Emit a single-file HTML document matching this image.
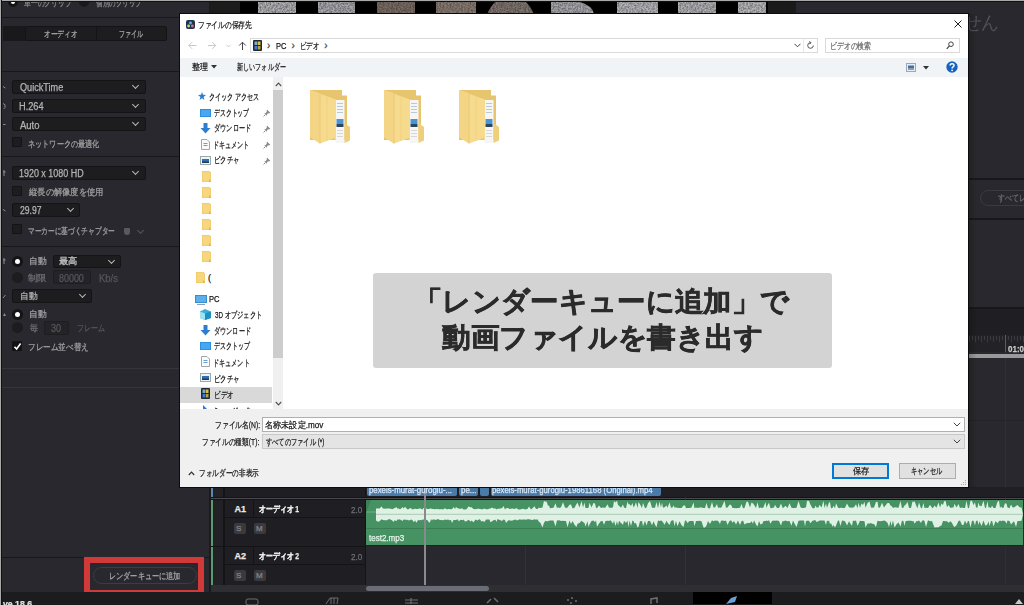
<!DOCTYPE html>
<html lang="ja">
<head>
<meta charset="utf-8">
<style>
*{box-sizing:border-box;margin:0;padding:0}
html,body{width:1024px;height:605px;overflow:hidden}
body{position:relative;background:#28282e;font-family:"Liberation Sans",sans-serif;color:#a0a0a2}
.a{position:absolute}
.t{position:absolute;white-space:nowrap;line-height:1}
.dd{position:absolute;background:#1d1d20;border:1px solid #141416;border-radius:2px}
.chev{position:absolute;width:5px;height:5px;border-right:1.3px solid #b8b8b8;border-bottom:1.3px solid #b8b8b8;transform:rotate(45deg)}
.cb{position:absolute;width:10px;height:10px;background:#1d1d20;border:1px solid #141416;border-radius:1px}
.hl{position:absolute;height:1px;background:#18181b}
</style>
</head>
<body>
<!-- LEFT PANEL -->
<div id="left">
  <!-- top radios (cut) -->
  <div class="a" style="left:8px;top:-3px;width:10px;height:10px;border-radius:50%;background:#141416"></div>
  <div class="a" style="left:11px;top:1px;width:4px;height:3px;border-radius:0 0 3px 3px;background:#fff"></div>
  <div class="a" style="left:79px;top:-3px;width:10px;height:10px;border-radius:50%;background:#1a1a1d"></div>
  <div class="hl" style="left:2px;top:17px;width:208px"></div>
  <!-- segmented -->
  <div class="a" style="left:3px;top:26px;width:164px;height:15px;background:#1d1d20;border:1px solid #141416;border-radius:2px"></div>
  <div class="a" style="left:3px;top:26px;width:23px;height:15px;background:#19191b"></div>
  <div class="a" style="left:25px;top:27px;width:1px;height:13px;background:#141416"></div>
  <div class="a" style="left:96px;top:27px;width:1px;height:13px;background:#141416"></div>
  <div class="hl" style="left:2px;top:71px;width:208px"></div>

  <div class="dd" style="left:12px;top:80px;width:134px;height:14px"></div>
  <div class="chev" style="left:133px;top:83px"></div>
  <div class="dd" style="left:12px;top:99px;width:134px;height:14px"></div>
  <div class="chev" style="left:133px;top:102px"></div>
  <div class="dd" style="left:12px;top:117px;width:134px;height:14px"></div>
  <div class="chev" style="left:133px;top:120px"></div>
  <div class="cb" style="left:12px;top:137px"></div>
  <div class="hl" style="left:2px;top:156px;width:208px"></div>

  <div class="dd" style="left:12px;top:166px;width:134px;height:14px"></div>
  <div class="chev" style="left:133px;top:169px"></div>
  <div class="cb" style="left:12px;top:186px"></div>
  <div class="dd" style="left:12px;top:203px;width:68px;height:14px"></div>
  <div class="chev" style="left:68px;top:206px"></div>
  <div class="cb" style="left:12px;top:224px"></div>
  <div class="a" style="left:124px;top:228px;width:6px;height:7px;background:#5a5a5e;border-radius:1px 1px 3px 3px"></div>
  <div class="chev" style="left:138px;top:228px;border-color:#55555a"></div>
  <div class="hl" style="left:2px;top:246px;width:208px"></div>

  <div class="a" style="left:12px;top:256px;width:11px;height:11px;border-radius:50%;background:#141416"></div>
  <div class="a" style="left:15px;top:259px;width:5px;height:5px;border-radius:50%;background:#fff"></div>
  <div class="dd" style="left:53px;top:255px;width:68px;height:13px"></div>
  <div class="chev" style="left:109px;top:258px"></div>
  <div class="a" style="left:12px;top:272px;width:11px;height:11px;border-radius:50%;background:#1d1d20"></div>
  <div class="a" style="left:53px;top:270px;width:38px;height:14px;background:#242428;border:1px solid #1e1e21;border-radius:2px"></div>
  <div class="dd" style="left:12px;top:289px;width:80px;height:14px"></div>
  <div class="chev" style="left:80px;top:292px"></div>
  <div class="a" style="left:12px;top:309px;width:11px;height:11px;border-radius:50%;background:#141416"></div>
  <div class="a" style="left:15px;top:312px;width:5px;height:5px;border-radius:50%;background:#fff"></div>
  <div class="a" style="left:12px;top:322px;width:11px;height:11px;border-radius:50%;background:#1d1d20"></div>
  <div class="a" style="left:44px;top:321px;width:25px;height:14px;background:#242428;border:1px solid #1e1e21;border-radius:2px"></div>
  <div class="cb" style="left:12px;top:341px;background:#121214"></div>
<svg class="a" style="left:13px;top:342px" width="9" height="9" viewBox="0 0 9 9"><path d="M1.5 4.8L3.6 7L7.6 1.6" stroke="#fff" stroke-width="1.6" fill="none"/></svg>
  <div class="a" style="left:2px;top:368px;width:208px;height:1px;background:#35353a"></div>
  <div class="a" style="left:2px;top:387px;width:208px;height:1px;background:#35353a"></div>

  <div class="hl" style="left:2px;top:557px;width:208px"></div>
  <div class="a" style="left:93px;top:567px;width:104px;height:17px;border:1px solid #3c3c41;border-radius:9px;background:#28282e"></div>
  <div class="a" style="left:84px;top:557px;width:120px;height:39px;border:6px solid #d23a3a"></div>
</div>
<svg class="a" style="left:0;top:0" width="12" height="400" viewBox="0 0 12 400">
<path d="M3 86.5L5.5 88" stroke="#8a8a8e" stroke-width="1"/>
<path d="M3 103.5Q6 104 5 107.5L3.5 109" stroke="#8a8a8e" stroke-width="1" fill="none"/>
<path d="M3 124.5H5.5" stroke="#8a8a8e" stroke-width="1"/>
<path d="M4 170V176M3 172H5.5" stroke="#8a8a8e" stroke-width="1"/>
<path d="M3 209.5L5.5 211" stroke="#8a8a8e" stroke-width="1"/>
<path d="M4 258V264M3 260H5.5" stroke="#8a8a8e" stroke-width="1"/>
<path d="M3 298L5.5 295" stroke="#8a8a8e" stroke-width="1"/>
<path d="M3 316L4.5 313L6 316Z" fill="#8a8a8e"/>
</svg>
<!-- panel separator -->
<div class="a" style="left:209px;top:2px;width:2px;height:590px;background:#1a1a1d"></div>

<!-- RIGHT BG PANEL -->
<div class="a" style="left:210px;top:2px;width:30px;height:12px;background:#1c1c1d"></div>
<div class="a" style="left:240px;top:2px;width:528px;height:12px;background:#000"></div>
<div class="a" style="left:768px;top:2px;width:28px;height:12px;background:#1a1a1a"></div>
<svg class="a" style="left:0;top:2px" width="1024" height="12" viewBox="0 2 1024 12"><defs><filter id="nz" x="0" y="0" width="100%" height="100%"><feTurbulence type="fractalNoise" baseFrequency="0.6" numOctaves="2" seed="4"/><feColorMatrix type="matrix" values="0 0 0 0 0  0 0 0 0 0  0 0 0 0 0  0 0 0 -1.6 1.1"/><feComposite in2="SourceGraphic" operator="in"/></filter></defs><rect x="258" y="2" width="38" height="12" fill="#b4b4b8"/><rect x="258" y="2" width="38" height="12" fill="#000" filter="url(#nz)" opacity="0.55"/><rect x="318" y="2" width="37" height="12" fill="#a8a8ae"/><rect x="318" y="2" width="37" height="12" fill="#000" filter="url(#nz)" opacity="0.5"/><rect x="377" y="2" width="38" height="12" fill="#7a6c64"/><rect x="377" y="2" width="38" height="12" fill="#000" filter="url(#nz)" opacity="0.45"/><rect x="436" y="2" width="40" height="12" fill="#877a72"/><rect x="436" y="2" width="40" height="12" fill="#000" filter="url(#nz)" opacity="0.45"/><clipPath id="moon"><circle cx="510.5" cy="20.7" r="24"/></clipPath><g clip-path="url(#moon)"><rect x="486" y="2" width="49" height="12" fill="#807670"/><rect x="486" y="2" width="49" height="12" fill="#000" filter="url(#nz)" opacity="0.5"/></g><clipPath id="m6"><path d="M551 2H580Q593 6 594 14H551Z"/></clipPath><g clip-path="url(#m6)"><rect x="551" y="2" width="43" height="12" fill="#a6a6ac"/><rect x="551" y="2" width="43" height="12" fill="#000" filter="url(#nz)" opacity="0.5"/></g><rect x="617" y="2" width="41" height="12" fill="#b6b6ba"/><rect x="617" y="2" width="41" height="12" fill="#000" filter="url(#nz)" opacity="0.5"/><rect x="678" y="2" width="38" height="12" fill="#b2b2b6"/><rect x="678" y="2" width="38" height="12" fill="#000" filter="url(#nz)" opacity="0.5"/><rect x="738" y="2" width="28" height="12" fill="#b8b8bc"/><rect x="738" y="2" width="28" height="12" fill="#000" filter="url(#nz)" opacity="0.5"/></svg>

<!-- TIMELINE -->
<div class="a" style="left:211px;top:487px;width:813px;height:105px;background:#28282e"></div>
<div class="a" style="left:211px;top:487px;width:155px;height:98px;background:#1f1f23"></div>
<div class="a" style="left:213px;top:487px;width:10px;height:98px;background:#222226"></div>
<div class="a" style="left:223px;top:487px;width:2px;height:98px;background:#141416"></div>
<div class="a" style="left:365px;top:487px;width:1px;height:98px;background:#141416"></div>
<div class="a" style="left:211px;top:487px;width:2px;height:10px;background:#5a86b0"></div>
<div class="a" style="left:211px;top:500px;width:2px;height:85px;background:#5a9a70"></div>
<div class="a" style="left:211px;top:497px;width:813px;height:1px;background:#141416"></div>
<div class="a" style="left:211px;top:498px;width:813px;height:1px;background:#4a4a50"></div>
<div class="a" style="left:211px;top:499px;width:813px;height:1px;background:#141416"></div>
<!-- A1 -->
<div class="a" style="left:225px;top:517px;width:140px;height:1px;background:#141416"></div>
<div class="a" style="left:253px;top:500px;width:1px;height:17px;background:#141416"></div>
<div class="a" style="left:234px;top:523px;width:12px;height:11px;background:#3a3a3e;border-radius:2px"></div>
<div class="a" style="left:254px;top:523px;width:12px;height:11px;background:#3a3a3e;border-radius:2px"></div>
<div class="a" style="left:211px;top:546px;width:155px;height:1px;background:#141416"></div>
<!-- A2 -->
<div class="a" style="left:225px;top:564px;width:140px;height:1px;background:#141416"></div>
<div class="a" style="left:253px;top:547px;width:1px;height:17px;background:#141416"></div>
<div class="a" style="left:234px;top:570px;width:12px;height:11px;background:#3a3a3e;border-radius:2px"></div>
<div class="a" style="left:254px;top:570px;width:12px;height:11px;background:#3a3a3e;border-radius:2px"></div>
<!-- grid lines -->
<div class="a" style="left:525px;top:546px;width:1px;height:39px;background:#313136"></div>
<div class="a" style="left:685px;top:487px;width:1px;height:98px;background:#313136"></div>
<div class="a" style="left:1005px;top:352px;width:1px;height:233px;background:#2f2f34"></div>
<div class="a" style="left:968px;top:420px;width:56px;height:1px;background:#232327"></div>
<div class="a" style="left:366px;top:487px;width:658px;height:10px;background:#202024"></div>
<!-- video clips -->
<div class="a" style="left:367px;top:487px;width:90px;height:9px;background:#4a7aa8;border-radius:0 0 2px 2px"></div>
<div class="a" style="left:459px;top:487px;width:19px;height:9px;background:#4a7aa8;border-radius:0 0 2px 2px"></div>
<div class="a" style="left:480px;top:487px;width:9px;height:9px;background:#4a7aa8;border-radius:0 0 2px 2px"></div>
<div class="a" style="left:491px;top:487px;width:170px;height:9px;background:#4a7aa8;border-radius:0 0 2px 2px"></div>
<!-- audio clip -->
<div class="a" style="left:366px;top:500px;width:657px;height:45px;background:#479263"></div>
<div class="a" style="left:366px;top:528px;width:657px;height:1px;background:#3c7e53"></div>
<div class="a" style="left:366px;top:545px;width:658px;height:1px;background:#1a2420"></div>
<svg class="a" style="left:0;top:0" width="1024" height="605" viewBox="0 0 1024 605"><path d="M376,514.3 L376.0,508.4 L378.0,508.6 L379.5,508.6 L381.5,506.4 L383.0,508.5 L385.0,508.7 L387.0,508.6 L389.0,508.5 L391.0,508.7 L392.0,509.3 L393.5,508.8 L394.5,508.0 L396.5,507.2 L397.5,508.7 L398.5,508.2 L399.5,509.3 L401.0,508.8 L402.5,507.0 L403.5,508.6 L405.0,506.8 L407.0,509.1 L408.0,509.4 L410.0,508.2 L411.0,508.0 L412.0,509.5 L414.0,509.0 L415.0,508.8 L416.5,508.9 L418.0,508.9 L419.0,508.4 L420.5,508.5 L421.5,509.1 L422.5,509.5 L423.5,508.1 L425.5,508.3 L427.5,509.1 L429.0,508.9 L430.0,508.4 L431.0,508.5 L432.0,509.1 L433.0,508.9 L434.0,509.1 L435.0,509.5 L436.0,508.7 L437.0,509.3 L438.5,508.9 L440.0,509.4 L441.0,508.9 L443.0,509.5 L445.0,508.3 L447.0,509.4 L448.0,508.9 L449.0,508.9 L451.0,509.2 L452.0,509.2 L453.5,507.0 L455.0,509.0 L456.0,507.0 L457.5,508.2 L459.0,508.5 L460.0,508.9 L461.0,508.6 L462.5,508.6 L463.5,509.4 L465.0,509.5 L466.5,509.3 L468.5,506.5 L470.5,507.2 L471.5,507.3 L473.5,508.9 L475.5,509.3 L477.5,508.7 L479.0,508.7 L480.0,508.9 L481.5,509.2 L483.0,509.3 L484.5,508.4 L486.0,509.2 L488.0,509.2 L489.5,508.5 L490.5,508.4 L492.0,507.6 L493.5,508.5 L495.5,508.5 L496.5,509.4 L497.5,508.7 L499.0,508.7 L500.0,508.6 L502.0,508.3 L503.5,505.9 L505.0,509.5 L506.0,508.3 L508.0,508.0 L509.5,509.0 L511.0,508.8 L512.5,508.5 L514.5,509.0 L515.5,508.6 L517.0,508.3 L518.0,509.4 L520.0,509.4 L521.0,509.3 L523.0,508.7 L524.0,508.9 L525.0,509.4 L526.0,509.3 L527.5,508.9 L529.0,506.4 L531.0,509.4 L532.5,508.3 L534.5,506.2 L536.0,509.0 L537.5,509.1 L538.5,507.8 L540.5,507.9 L542.5,507.4 L544.0,500.8 L545.5,502.0 L546.5,501.2 L548.0,505.8 L549.0,505.4 L550.0,508.2 L551.5,508.0 L553.5,507.7 L555.5,503.2 L557.0,508.2 L558.0,507.3 L559.5,508.1 L561.0,507.3 L563.0,502.2 L565.0,507.4 L566.0,508.1 L567.5,507.5 L569.5,504.8 L571.0,504.4 L572.5,508.3 L573.5,508.2 L574.5,507.7 L576.5,504.1 L577.5,502.8 L579.5,507.4 L581.5,501.0 L583.0,507.4 L584.5,502.4 L585.5,508.1 L587.5,508.1 L588.5,507.7 L589.5,502.7 L591.5,507.5 L593.5,503.0 L595.0,503.5 L596.0,507.7 L597.0,508.2 L599.0,505.6 L601.0,508.1 L602.5,507.4 L604.0,507.7 L605.5,507.6 L607.5,504.3 L609.0,507.7 L610.0,507.6 L611.0,508.0 L613.0,507.3 L614.0,501.1 L615.5,502.4 L617.0,500.8 L618.0,505.1 L619.0,505.8 L621.0,507.8 L623.0,504.4 L624.0,507.5 L626.0,508.2 L627.5,501.4 L628.5,504.2 L629.5,504.2 L631.0,506.0 L632.5,503.1 L633.5,507.4 L634.5,506.0 L636.0,502.3 L637.5,508.0 L638.5,501.9 L640.0,504.3 L642.0,508.0 L643.0,502.8 L645.0,508.2 L646.5,507.5 L648.0,503.3 L650.0,501.0 L652.0,507.8 L653.5,507.8 L655.0,507.7 L656.5,501.9 L658.0,508.3 L659.5,501.5 L661.0,507.4 L662.0,502.5 L663.0,507.8 L664.5,507.3 L666.5,505.5 L667.5,507.7 L669.5,502.4 L671.0,507.7 L672.5,507.4 L673.5,505.2 L674.5,507.4 L676.0,507.6 L677.5,507.7 L679.5,507.9 L681.5,508.1 L683.5,505.6 L685.0,505.6 L686.0,508.2 L687.5,508.1 L689.5,508.1 L691.5,507.4 L693.5,502.6 L694.5,508.3 L696.0,507.6 L697.5,508.1 L699.5,507.6 L701.5,507.4 L703.5,507.9 L705.0,508.0 L706.5,503.0 L708.0,508.2 L710.0,508.2 L712.0,502.0 L713.5,507.5 L715.0,507.4 L717.0,504.1 L718.0,507.7 L720.0,507.5 L721.0,508.1 L722.5,505.3 L724.5,500.8 L726.0,507.7 L727.5,507.4 L729.5,504.7 L731.0,504.7 L732.5,507.9 L734.0,508.0 L736.0,508.3 L738.0,508.1 L740.0,507.8 L741.5,504.1 L743.0,508.2 L744.5,508.0 L746.5,501.7 L748.0,501.7 L750.0,507.4 L751.5,502.5 L753.0,503.4 L754.0,504.8 L756.0,508.1 L757.5,502.2 L759.0,508.2 L760.5,507.4 L762.5,507.9 L763.5,507.3 L765.5,502.1 L766.5,508.1 L767.5,505.2 L769.0,502.8 L770.5,508.3 L772.0,508.1 L774.0,507.6 L775.0,504.8 L777.0,508.1 L779.0,508.1 L781.0,503.6 L782.5,507.7 L783.5,507.7 L785.5,505.8 L787.5,507.9 L789.5,503.2 L791.5,507.7 L793.0,508.1 L794.5,508.0 L796.5,507.7 L798.5,500.9 L800.5,507.3 L802.0,507.9 L804.0,508.0 L805.0,507.5 L806.0,507.4 L807.0,500.8 L809.0,501.1 L810.5,504.8 L812.5,508.2 L814.5,508.3 L815.5,505.4 L816.5,507.5 L818.5,507.5 L819.5,504.7 L821.5,507.5 L823.5,500.8 L824.5,508.0 L826.0,503.4 L827.0,508.1 L828.0,505.2 L829.0,502.5 L830.0,502.2 L831.0,508.2 L832.5,507.9 L833.5,505.7 L835.0,508.2 L836.0,503.3 L838.0,507.6 L839.0,508.2 L840.5,507.7 L842.0,507.8 L843.5,508.3 L845.0,507.8 L847.0,503.6 L849.0,507.3 L850.0,507.6 L852.0,507.8 L853.0,507.5 L854.0,507.3 L856.0,504.2 L857.5,508.2 L858.5,502.7 L860.0,507.8 L861.5,503.5 L863.0,504.9 L864.5,501.8 L865.5,507.8 L867.5,503.0 L869.5,501.6 L871.0,507.4 L872.0,507.8 L874.0,507.6 L876.0,502.0 L877.5,501.7 L878.5,507.7 L880.0,507.4 L882.0,502.8 L884.0,507.6 L885.5,505.6 L887.5,503.1 L889.0,502.9 L890.5,505.4 L891.5,505.9 L893.0,508.0 L894.5,507.3 L896.5,507.6 L898.5,507.7 L900.5,500.9 L902.0,508.2 L903.5,507.6 L904.5,505.5 L905.5,505.1 L907.5,502.1 L909.0,507.7 L911.0,508.1 L912.5,501.5 L913.5,502.1 L914.5,501.3 L916.5,506.3 L917.5,508.2 L919.0,502.4 L921.0,508.2 L922.0,507.9 L923.5,502.9 L924.5,508.1 L926.0,507.8 L928.0,508.1 L930.0,504.8 L932.0,507.8 L933.0,508.1 L934.5,505.6 L936.5,507.7 L938.5,502.4 L940.0,507.4 L941.5,503.6 L943.0,504.9 L944.0,501.6 L945.5,500.8 L947.0,507.3 L948.5,505.1 L950.5,507.9 L952.0,507.4 L953.5,507.5 L954.5,503.8 L956.5,507.6 L958.5,503.9 L960.0,507.9 L962.0,507.5 L963.5,508.0 L965.0,507.9 L966.5,500.8 L968.0,508.2 L969.0,508.0 L970.5,500.8 L972.0,500.8 L973.5,505.3 L975.0,502.3 L976.0,507.5 L977.5,507.4 L978.5,502.6 L979.5,505.8 L981.5,506.2 L983.5,500.8 L985.0,508.1 L986.0,507.7 L987.5,501.2 L988.5,507.4 L989.5,507.3 L991.0,508.0 L992.0,505.4 L993.5,508.1 L995.5,507.9 L997.5,501.8 L999.0,500.8 L1000.0,507.8 L1001.5,506.4 L1002.5,508.3 L1003.5,507.7 L1005.0,503.2 L1006.5,503.7 L1007.5,507.4 L1009.5,508.2 L1011.0,504.4 L1012.5,507.3 L1014.0,507.6 L1016.0,506.0 L1017.5,505.0 L1019.5,507.3 L1021.5,507.5 L1023,514.3 L1021.5,520.8 L1019.5,521.0 L1017.5,520.9 L1016.0,527.0 L1014.0,521.2 L1012.5,522.7 L1011.0,524.5 L1009.5,520.9 L1007.5,520.5 L1006.5,523.8 L1005.0,520.9 L1003.5,520.7 L1002.5,520.6 L1001.5,521.3 L1000.0,520.4 L999.0,521.2 L997.5,523.3 L995.5,520.9 L993.5,526.5 L992.0,520.8 L991.0,521.2 L989.5,526.1 L988.5,521.3 L987.5,524.0 L986.0,525.7 L985.0,524.8 L983.5,520.6 L981.5,526.0 L979.5,521.2 L978.5,525.1 L977.5,520.4 L976.0,520.9 L975.0,525.5 L973.5,520.7 L972.0,520.7 L970.5,527.5 L969.0,521.1 L968.0,520.9 L966.5,523.9 L965.0,520.5 L963.5,525.1 L962.0,525.0 L960.0,520.4 L958.5,521.1 L956.5,525.2 L954.5,526.9 L953.5,526.1 L952.0,522.9 L950.5,521.3 L948.5,522.8 L947.0,521.3 L945.5,521.2 L944.0,521.0 L943.0,521.0 L941.5,525.6 L940.0,525.9 L938.5,527.3 L936.5,527.2 L934.5,527.4 L933.0,523.8 L932.0,521.1 L930.0,521.3 L928.0,520.3 L926.0,527.0 L924.5,521.0 L923.5,520.3 L922.0,520.7 L921.0,523.0 L919.0,520.5 L917.5,521.2 L916.5,521.0 L914.5,523.7 L913.5,521.0 L912.5,521.2 L911.0,520.8 L909.0,520.8 L907.5,520.7 L905.5,521.2 L904.5,525.9 L903.5,521.2 L902.0,520.5 L900.5,526.4 L898.5,522.6 L896.5,524.3 L894.5,527.5 L893.0,520.6 L891.5,526.0 L890.5,520.7 L889.0,526.9 L887.5,522.7 L885.5,520.9 L884.0,520.6 L882.0,521.0 L880.0,521.2 L878.5,521.1 L877.5,520.8 L876.0,527.1 L874.0,524.1 L872.0,523.7 L871.0,523.0 L869.5,523.4 L867.5,523.4 L865.5,527.5 L864.5,521.2 L863.0,521.0 L861.5,520.9 L860.0,520.7 L858.5,524.1 L857.5,525.8 L856.0,520.4 L854.0,520.9 L853.0,520.5 L852.0,525.7 L850.0,523.1 L849.0,521.3 L847.0,525.4 L845.0,521.2 L843.5,520.7 L842.0,520.5 L840.5,525.9 L839.0,520.4 L838.0,520.4 L836.0,525.4 L835.0,527.5 L833.5,525.0 L832.5,526.8 L831.0,523.0 L830.0,524.3 L829.0,520.6 L828.0,521.2 L827.0,520.6 L826.0,525.0 L824.5,520.5 L823.5,520.5 L821.5,520.6 L819.5,520.5 L818.5,521.3 L816.5,522.1 L815.5,520.3 L814.5,520.3 L812.5,520.8 L810.5,523.3 L809.0,520.8 L807.0,520.7 L806.0,520.9 L805.0,526.5 L804.0,520.5 L802.0,520.5 L800.5,520.4 L798.5,520.7 L796.5,527.1 L794.5,523.4 L793.0,520.6 L791.5,525.7 L789.5,520.9 L787.5,521.2 L785.5,520.5 L783.5,521.2 L782.5,521.0 L781.0,525.4 L779.0,520.9 L777.0,520.4 L775.0,520.7 L774.0,520.5 L772.0,520.9 L770.5,523.8 L769.0,520.3 L767.5,521.0 L766.5,520.4 L765.5,521.1 L763.5,521.1 L762.5,523.4 L760.5,524.6 L759.0,520.9 L757.5,526.4 L756.0,524.5 L754.0,520.3 L753.0,523.8 L751.5,521.2 L750.0,523.0 L748.0,523.0 L746.5,523.3 L744.5,524.4 L743.0,520.6 L741.5,521.3 L740.0,524.9 L738.0,520.6 L736.0,524.5 L734.0,520.9 L732.5,522.7 L731.0,520.3 L729.5,521.0 L727.5,525.1 L726.0,520.6 L724.5,521.0 L722.5,520.6 L721.0,520.7 L720.0,524.1 L718.0,520.8 L717.0,520.7 L715.0,520.4 L713.5,521.2 L712.0,520.3 L710.0,523.9 L708.0,521.1 L706.5,525.4 L705.0,527.5 L703.5,527.4 L701.5,521.2 L699.5,520.8 L697.5,521.0 L696.0,521.1 L694.5,526.3 L693.5,521.0 L691.5,521.1 L689.5,521.1 L687.5,523.1 L686.0,520.6 L685.0,520.4 L683.5,526.9 L681.5,524.9 L679.5,521.3 L677.5,526.2 L676.0,520.8 L674.5,526.3 L673.5,520.5 L672.5,520.3 L671.0,521.1 L669.5,525.1 L667.5,522.4 L666.5,520.7 L664.5,524.8 L663.0,522.2 L662.0,521.0 L661.0,520.6 L659.5,520.9 L658.0,520.5 L656.5,527.3 L655.0,524.7 L653.5,521.2 L652.0,525.2 L650.0,520.9 L648.0,521.0 L646.5,525.6 L645.0,520.8 L643.0,526.2 L642.0,521.1 L640.0,521.2 L638.5,526.8 L637.5,527.5 L636.0,523.1 L634.5,523.5 L633.5,521.0 L632.5,520.4 L631.0,525.9 L629.5,520.6 L628.5,527.3 L627.5,520.5 L626.0,523.0 L624.0,520.8 L623.0,524.8 L621.0,522.9 L619.0,520.7 L618.0,525.5 L617.0,520.9 L615.5,526.1 L614.0,520.6 L613.0,523.8 L611.0,520.8 L610.0,520.3 L609.0,521.0 L607.5,520.8 L605.5,521.0 L604.0,524.7 L602.5,521.1 L601.0,521.0 L599.0,523.4 L597.0,526.7 L596.0,520.3 L595.0,522.3 L593.5,520.4 L591.5,521.0 L589.5,524.5 L588.5,526.9 L587.5,521.2 L585.5,526.5 L584.5,523.0 L583.0,522.0 L581.5,520.8 L579.5,522.9 L577.5,523.7 L576.5,526.9 L574.5,524.8 L573.5,522.7 L572.5,521.1 L571.0,524.0 L569.5,520.5 L567.5,527.2 L566.0,521.0 L565.0,520.9 L563.0,520.8 L561.0,521.1 L559.5,520.3 L558.0,520.4 L557.0,520.3 L555.5,526.4 L553.5,520.5 L551.5,520.4 L550.0,520.5 L549.0,520.7 L548.0,521.2 L546.5,521.3 L545.5,520.8 L544.0,522.8 L542.5,527.5 L540.5,522.9 L538.5,521.2 L537.5,519.3 L536.0,519.8 L534.5,519.2 L532.5,519.9 L531.0,519.7 L529.0,519.3 L527.5,519.2 L526.0,519.8 L525.0,519.5 L524.0,519.4 L523.0,519.6 L521.0,519.8 L520.0,519.2 L518.0,520.1 L517.0,520.4 L515.5,519.5 L514.5,519.8 L512.5,520.4 L511.0,520.8 L509.5,520.3 L508.0,520.4 L506.0,523.0 L505.0,519.9 L503.5,519.4 L502.0,520.9 L500.0,520.1 L499.0,519.8 L497.5,519.1 L496.5,522.1 L495.5,519.7 L493.5,520.3 L492.0,521.3 L490.5,522.2 L489.5,519.6 L488.0,519.5 L486.0,519.6 L484.5,522.0 L483.0,521.0 L481.5,521.5 L480.0,519.5 L479.0,519.3 L477.5,520.4 L475.5,519.6 L473.5,522.3 L471.5,520.4 L470.5,521.5 L468.5,519.8 L466.5,521.2 L465.0,521.4 L463.5,519.6 L462.5,520.2 L461.0,519.7 L460.0,520.1 L459.0,521.6 L457.5,519.3 L456.0,520.0 L455.0,520.1 L453.5,519.9 L452.0,522.9 L451.0,519.9 L449.0,520.2 L448.0,519.2 L447.0,520.0 L445.0,519.4 L443.0,520.2 L441.0,520.0 L440.0,520.0 L438.5,519.3 L437.0,519.2 L436.0,520.0 L435.0,519.8 L434.0,519.4 L433.0,519.3 L432.0,520.6 L431.0,519.1 L430.0,522.3 L429.0,522.5 L427.5,520.3 L425.5,519.6 L423.5,519.4 L422.5,519.4 L421.5,520.3 L420.5,520.0 L419.0,520.3 L418.0,520.0 L416.5,522.7 L415.0,520.2 L414.0,522.3 L412.0,519.8 L411.0,519.5 L410.0,520.2 L408.0,520.2 L407.0,519.8 L405.0,519.8 L403.5,519.6 L402.5,521.1 L401.0,520.1 L399.5,519.2 L398.5,519.7 L397.5,519.2 L396.5,521.0 L394.5,520.3 L393.5,522.1 L392.0,520.3 L391.0,519.7 L389.0,519.1 L387.0,520.3 L385.0,520.2 L383.0,520.0 L381.5,519.3 L379.5,521.3 L378.0,521.7 L376.0,520.6 Z" fill="#dff1e5"/><rect x="376" y="513.8" width="647" height="1" fill="#a9c9b3"/><rect x="366" y="511.5" width="10" height="1" fill="#6fb088"/><path d="M366 500H371L366 513Z" fill="#3d7f55"/></svg>
<!-- playhead -->
<div class="a" style="left:424px;top:487px;width:2px;height:98px;background:#8a8a8e"></div>
<!-- scroll -->
<div class="a" style="left:211px;top:585px;width:813px;height:7px;background:#2e2e33"></div>
<div class="a" style="left:366px;top:586px;width:123px;height:5px;background:#6a6d75;border-radius:3px"></div>
<!-- bottom bar -->
<div class="a" style="left:2px;top:592px;width:1022px;height:13px;background:#1c1c1f"></div>
<div class="a" style="left:693px;top:592px;width:79px;height:12px;background:#000"></div>
<svg class="a" style="left:0;top:592px" width="1024" height="13" viewBox="0 592 1024 13">
<rect x="246" y="599" width="12" height="6" rx="2" fill="none" stroke="#6e6e72" stroke-width="1"/>
<path d="M326 604L330 598H338L337 604M331 598V604M334 598V604" stroke="#6e6e72" stroke-width="1" fill="none"/>
<path d="M405 600H418M405 603H418M411 598V604" stroke="#6e6e72" stroke-width="1.2"/>
<path d="M487 603L491 599M494 598L498 602" stroke="#6e6e72" stroke-width="1.5"/>
<circle cx="568" cy="600" r="1" fill="#6e6e72"/><circle cx="572" cy="598" r="1" fill="#6e6e72"/><circle cx="576" cy="601" r="1" fill="#6e6e72"/><circle cx="571" cy="603" r="1" fill="#6e6e72"/>
<path d="M651 604V599L657 598V603" stroke="#6e6e72" stroke-width="1.5" fill="none"/>
<path d="M726 604L731 598L737 596L735 602Z" fill="#6a9fd8"/>
<path d="M1015 604L1019 599L1023 604Z" fill="#c8c8c8"/>
</svg>

<!-- RIGHT PANEL (behind dialog right) -->
<div class="a" style="left:968px;top:178px;width:56px;height:2px;background:#18181b"></div>
<div class="a" style="left:980px;top:190px;width:60px;height:16px;border:1px solid #3a3a40;border-radius:8px"></div>
<div class="a" style="left:968px;top:218px;width:56px;height:2px;background:#18181b"></div>
<div class="a" style="left:968px;top:307px;width:56px;height:2px;background:#18181b"></div>
<div class="a" style="left:968px;top:309px;width:56px;height:26px;background:#1f1f23"></div>
<div class="a" style="left:968px;top:335px;width:56px;height:17px;background:#232327"></div>
<svg class="a" style="left:968px;top:335px" width="56" height="17" viewBox="0 0 56 17"><rect x="1" y="1" width="1" height="6" fill="#3a3a40"/><rect x="4" y="1" width="1" height="4" fill="#3a3a40"/><rect x="7" y="1" width="1" height="6" fill="#3a3a40"/><rect x="10" y="1" width="1" height="4" fill="#3a3a40"/><rect x="13" y="1" width="1" height="6" fill="#3a3a40"/><rect x="16" y="1" width="1" height="4" fill="#3a3a40"/><rect x="19" y="1" width="1" height="6" fill="#3a3a40"/><rect x="22" y="1" width="1" height="4" fill="#3a3a40"/><rect x="25" y="1" width="1" height="6" fill="#3a3a40"/><rect x="28" y="1" width="1" height="4" fill="#3a3a40"/><rect x="31" y="1" width="1" height="6" fill="#3a3a40"/><rect x="34" y="1" width="1" height="4" fill="#3a3a40"/><rect x="40" y="1" width="1" height="4" fill="#3a3a40"/><rect x="43" y="1" width="1" height="6" fill="#3a3a40"/><rect x="46" y="1" width="1" height="4" fill="#3a3a40"/><rect x="49" y="1" width="1" height="6" fill="#3a3a40"/><rect x="52" y="1" width="1" height="4" fill="#3a3a40"/><rect x="55" y="1" width="1" height="6" fill="#3a3a40"/><rect x="37" y="0" width="1" height="17" fill="#5a5a60"/></svg>
<div class="a" style="left:968px;top:354px;width:56px;height:4px;background:#9a9a9a"></div>

<div class="t" style="left:24.25px;top:-1.5px;font-size:9px;color:#8a8a8e;-webkit-text-stroke:0.25px #8a8a8e;transform:scaleX(0.754);transform-origin:0 0">単一のクリップ</div>
<div class="t" style="left:96.0px;top:-1.5px;font-size:9px;color:#8a8a8e;-webkit-text-stroke:0.25px #8a8a8e;transform:scaleX(0.726);transform-origin:0 0">個別のクリップ</div>
<div class="t" style="left:44.26px;top:30.0px;font-size:9px;color:#a8a8aa;-webkit-text-stroke:0.25px #a8a8aa;transform:scaleX(0.744);transform-origin:0 0">オーディオ</div>
<div class="t" style="left:119.33px;top:30.0px;font-size:9px;color:#a8a8aa;-webkit-text-stroke:0.25px #a8a8aa;transform:scaleX(0.671);transform-origin:0 0">ファイル</div>
<div class="t" style="left:20.0px;top:83.3px;font-size:10px;color:#b4b4b6;-webkit-text-stroke:0.25px #b4b4b6;transform:scaleX(0.911);transform-origin:0 0">QuickTime</div>
<div class="t" style="left:19.08px;top:102.3px;font-size:10px;color:#b4b4b6;-webkit-text-stroke:0.25px #b4b4b6;transform:scaleX(0.92);transform-origin:0 0">H.264</div>
<div class="t" style="left:20.0px;top:120.5px;font-size:10px;color:#b4b4b6;-webkit-text-stroke:0.25px #b4b4b6;transform:scaleX(0.95);transform-origin:0 0">Auto</div>
<div class="t" style="left:27.71px;top:139.5px;font-size:9px;color:#a0a0a2;-webkit-text-stroke:0.25px #a0a0a2;transform:scaleX(0.792);transform-origin:0 0">ネットワークの最適化</div>
<div class="t" style="left:19.11px;top:169.2px;font-size:10px;color:#b4b4b6;-webkit-text-stroke:0.25px #b4b4b6;transform:scaleX(0.894);transform-origin:0 0">1920 x 1080 HD</div>
<div class="t" style="left:28.5px;top:187.7px;font-size:9px;color:#a0a0a2;-webkit-text-stroke:0.25px #a0a0a2;transform:scaleX(0.919);transform-origin:0 0">縦長の解像度を使用</div>
<div class="t" style="left:20.0px;top:206.4px;font-size:10px;color:#b4b4b6;-webkit-text-stroke:0.25px #b4b4b6;transform:scaleX(0.86);transform-origin:0 0">29.97</div>
<div class="t" style="left:27.76px;top:226.7px;font-size:9px;color:#a0a0a2;-webkit-text-stroke:0.25px #a0a0a2;transform:scaleX(0.743);transform-origin:0 0">マーカーに基づくチャプター</div>
<div class="t" style="left:28.53px;top:257.0px;font-size:9px;color:#a0a0a2;-webkit-text-stroke:0.25px #a0a0a2;transform:scaleX(0.971);transform-origin:0 0">自動</div>
<div class="t" style="left:59.47px;top:257.0px;font-size:9px;color:#c8c8ca;-webkit-text-stroke:0.25px #c8c8ca;transform:scaleX(1.031);transform-origin:0 0">最高</div>
<div class="t" style="left:28.47px;top:273.5px;font-size:9px;color:#6e6e72;-webkit-text-stroke:0.25px #6e6e72;transform:scaleX(1.031);transform-origin:0 0">制限</div>
<div class="t" style="left:59.0px;top:273.5px;font-size:10px;color:#55555a;-webkit-text-stroke:0.25px #55555a;transform:scaleX(0.893);transform-origin:0 0">80000</div>
<div class="t" style="left:99.05px;top:273.5px;font-size:10px;color:#55555a;-webkit-text-stroke:0.25px #55555a;transform:scaleX(0.947);transform-origin:0 0">Kb/s</div>
<div class="t" style="left:19.53px;top:292.0px;font-size:9px;color:#b0b0b2;-webkit-text-stroke:0.25px #b0b0b2;transform:scaleX(0.971);transform-origin:0 0">自動</div>
<div class="t" style="left:28.53px;top:310.4px;font-size:9px;color:#a0a0a2;-webkit-text-stroke:0.25px #a0a0a2;transform:scaleX(0.971);transform-origin:0 0">自動</div>
<div class="t" style="left:29.8px;top:323.6px;font-size:9px;color:#6e6e72;-webkit-text-stroke:0.25px #6e6e72;transform:scaleX(0.9);transform-origin:0 0">毎</div>
<div class="t" style="left:51.2px;top:323.6px;font-size:10px;color:#55555a;-webkit-text-stroke:0.25px #55555a;transform:scaleX(0.909);transform-origin:0 0">30</div>
<div class="t" style="left:76.72px;top:323.6px;font-size:9px;color:#55555a;-webkit-text-stroke:0.25px #55555a;transform:scaleX(0.779);transform-origin:0 0">フレーム</div>
<div class="t" style="left:27.65px;top:342.5px;font-size:9px;color:#a0a0a2;-webkit-text-stroke:0.25px #a0a0a2;transform:scaleX(0.846);transform-origin:0 0">フレーム並べ替え</div>
<div class="t" style="left:109.2px;top:571.5px;font-size:9px;color:#a8a8aa;-webkit-text-stroke:0.25px #a8a8aa;transform:scaleX(0.795);transform-origin:0 0">レンダーキューに追加</div>
<div class="t" style="left:3.0px;top:599.5px;font-size:9px;color:#e0e0e0;font-weight:700;-webkit-text-stroke:0.25px #e0e0e0;transform:scaleX(0.967);transform-origin:0 0">ve 18.6</div>
<div class="t" style="left:234.5px;top:504.9px;font-size:9px;color:#eaeaea;font-weight:700;-webkit-text-stroke:0.25px #eaeaea">A1</div>
<div class="t" style="left:259.0px;top:505.0px;font-size:9px;color:#eaeaea;font-weight:700;-webkit-text-stroke:0.25px #eaeaea;transform:scaleX(0.765);transform-origin:0 0">オーディオ 1</div>
<div class="t" style="left:351.4px;top:505.5px;font-size:9px;color:#707074;-webkit-text-stroke:0.25px #707074;transform:scaleX(0.9);transform-origin:0 0">2.0</div>
<div class="t" style="left:234.5px;top:552.4px;font-size:9px;color:#eaeaea;font-weight:700;-webkit-text-stroke:0.25px #eaeaea">A2</div>
<div class="t" style="left:259.0px;top:552.4px;font-size:9px;color:#eaeaea;font-weight:700;-webkit-text-stroke:0.25px #eaeaea;transform:scaleX(0.765);transform-origin:0 0">オーディオ 2</div>
<div class="t" style="left:351.4px;top:553.0px;font-size:9px;color:#707074;-webkit-text-stroke:0.25px #707074;transform:scaleX(0.9);transform-origin:0 0">2.0</div>
<div class="t" style="left:236.0px;top:525.2px;font-size:8px;color:#85858a;-webkit-text-stroke:0.25px #85858a">S</div>
<div class="t" style="left:256.0px;top:525.2px;font-size:8px;color:#85858a;-webkit-text-stroke:0.25px #85858a">M</div>
<div class="t" style="left:236.0px;top:572.2px;font-size:8px;color:#85858a;-webkit-text-stroke:0.25px #85858a">S</div>
<div class="t" style="left:256.0px;top:572.2px;font-size:8px;color:#85858a;-webkit-text-stroke:0.25px #85858a">M</div>
<div class="t" style="left:368.7px;top:534.3px;font-size:9px;color:#e8f4ec;-webkit-text-stroke:0.25px #e8f4ec;transform:scaleX(0.89);transform-origin:0 0">test2.mp3</div>
<div class="t" style="left:369.43px;top:486.0px;font-size:9px;color:#dce8f4;-webkit-text-stroke:0.25px #dce8f4;transform:scaleX(0.869);transform-origin:0 0">pexels-murat-gurogiu-...</div>
<div class="t" style="left:460.82px;top:486.0px;font-size:9px;color:#dce8f4;-webkit-text-stroke:0.25px #dce8f4;transform:scaleX(0.875);transform-origin:0 0">pe...</div>
<div class="t" style="left:492.44px;top:486.0px;font-size:9px;color:#dce8f4;-webkit-text-stroke:0.25px #dce8f4;transform:scaleX(0.859);transform-origin:0 0">pexels-murat-gurogiu-19861168 (Original).mp4</div>
<div class="t" style="left:840.14px;top:12.5px;font-size:19px;color:#505056;transform:scaleX(0.929);transform-origin:0 0">ジョブはありません</div>
<div class="t" style="left:998.0px;top:194.0px;font-size:9px;color:#6a6a70;-webkit-text-stroke:0.25px #6a6a70;transform:scaleX(0.774);transform-origin:0 0">すべてレンダー</div>
<div class="t" style="left:1008.0px;top:344.5px;font-size:9px;color:#c8c8c8;font-weight:700;-webkit-text-stroke:0.25px #c8c8c8;transform:scaleX(0.889);transform-origin:0 0">01:0</div>
<div class="a" style="left:968px;top:14px;width:9px;height:474px;background:linear-gradient(90deg,rgba(0,0,0,0.22),rgba(0,0,0,0))"></div>
<!-- DIALOG -->
<div class="a" style="left:179px;top:13px;width:790px;height:475px;background:#0c0c0e"></div>
<div class="a" id="dlg" style="left:180px;top:14px;width:788px;height:473px;background:#fff;overflow:hidden">
  <!-- title -->
  <svg class="a" style="left:6px;top:6px" width="9" height="9" viewBox="0 0 9 9"><rect x="0" y="0" width="9" height="9" rx="2" fill="#1d3550"/><circle cx="4.5" cy="3" r="1.4" fill="#6ab0e8"/><circle cx="2.6" cy="6" r="1.4" fill="#e8d060"/><circle cx="6.4" cy="6" r="1.4" fill="#e07070"/></svg>
  <svg class="a" style="left:774px;top:6px" width="8" height="8" viewBox="0 0 8 8"><path d="M0.5 0.5L7.5 7.5M7.5 0.5L0.5 7.5" stroke="#222" stroke-width="1"/></svg>
  <!-- nav -->
  <svg class="a" style="left:8px;top:26px" width="60" height="12" viewBox="0 0 60 12"><path d="M0.8 5.5H8.5M0.8 5.5L4.2 2.1M0.8 5.5L4.2 8.9" stroke="#c8c8c8" stroke-width="1" fill="none"/><path d="M20 5.5H27.7M27.7 5.5L24.3 2.1M27.7 5.5L24.3 8.9" stroke="#c8c8c8" stroke-width="1" fill="none"/><path d="M38.5 4.8L40.5 6.8L42.5 4.8" stroke="#c8c8c8" stroke-width="1" fill="none"/></svg>
  <svg class="a" style="left:58px;top:27px" width="9" height="11" viewBox="0 0 9 11"><path d="M4.5 1.2V9M4.5 1.2L1.2 4.5M4.5 1.2L7.8 4.5" stroke="#444" stroke-width="1" fill="none"/></svg>
  <div class="a" style="left:70px;top:24px;width:554px;height:15px;border:1px solid #d9d9d9"></div>
  <svg class="a" style="left:73px;top:26px" width="9" height="11" viewBox="0 0 9 11"><rect x="0" y="0" width="9" height="11" rx="1" fill="#1f2836"/><rect x="1.5" y="1.5" width="3" height="3.5" fill="#8aa8c8"/><rect x="5" y="1.5" width="2.5" height="3.5" fill="#d8c040"/><rect x="1.5" y="6" width="3" height="3.5" fill="#3a7fd0"/><rect x="5" y="6" width="2.5" height="3.5" fill="#b8a040"/></svg>
  <svg class="a" style="left:614px;top:29px" width="7" height="5" viewBox="0 0 7 5"><path d="M0.5 0.8L3.5 3.8L6.5 0.8" stroke="#444" stroke-width="1" fill="none"/></svg>
  <div class="a" style="left:623px;top:24px;width:15px;height:15px;border:1px solid #d9d9d9;border-left-color:#e8e8e8"></div>
  <svg class="a" style="left:626px;top:27px" width="9" height="9" viewBox="0 0 9 9"><path d="M7.3 4.5A2.8 2.8 0 1 1 4.5 1.7" stroke="#555" stroke-width="1" fill="none"/><path d="M3.2 0.5L5 1.7L3.6 3.2" stroke="#555" stroke-width="1" fill="none"/></svg>
  <div class="a" style="left:645px;top:24px;width:135px;height:15px;border:1px solid #d9d9d9"></div>
  <svg class="a" style="left:766px;top:27px" width="8" height="9" viewBox="0 0 8 9"><circle cx="5" cy="3.2" r="2.3" stroke="#444" stroke-width="1" fill="none"/><path d="M3.4 4.8L0.8 7.8" stroke="#444" stroke-width="1.2"/></svg>
  <!-- command bar -->
  <div class="a" style="left:0;top:44px;width:788px;height:19px;background:#f1f4f7"></div>
  <svg class="a" style="left:31px;top:51px" width="6" height="4" viewBox="0 0 6 4"><path d="M0 0H6L3 3.5Z" fill="#333"/></svg>
  <svg class="a" style="left:726px;top:49px" width="10" height="9" viewBox="0 0 10 9"><rect x="0.5" y="0.5" width="9" height="8" fill="#e6eef6" stroke="#9aa8b8" stroke-width="1"/><rect x="2" y="2.5" width="6" height="2.5" fill="#3a6fb0"/><rect x="2" y="5.5" width="6" height="1" fill="#3a4a60"/></svg>
  <svg class="a" style="left:743px;top:52px" width="6" height="4" viewBox="0 0 6 4"><path d="M0 0H6L3 3.5Z" fill="#333"/></svg>
  <svg class="a" style="left:766px;top:47px" width="12" height="12" viewBox="0 0 12 12"><circle cx="6" cy="6" r="5.7" fill="#1565c0"/><path d="M4.1 4.6C4.1 2.2 8 2.2 8 4.4C8 5.9 6.1 5.9 6.1 7.4" stroke="#fff" stroke-width="1.5" fill="none"/><circle cx="6.1" cy="9.3" r="0.9" fill="#fff"/></svg>
  <!-- nav pane -->
  <div class="a" style="left:93px;top:63px;width:10px;height:332px;background:#f0f0f0"></div>
  <svg class="a" style="left:95px;top:68px" width="7" height="5" viewBox="0 0 7 5"><path d="M0.8 4L3.5 1.2L6.2 4" stroke="#555" stroke-width="1.2" fill="none"/></svg>
  <div class="a" style="left:93px;top:76px;width:10px;height:268px;background:#cdcdcd"></div>
  <svg class="a" style="left:95px;top:387px" width="7" height="5" viewBox="0 0 7 5"><path d="M0.8 1L3.5 3.8L6.2 1" stroke="#555" stroke-width="1.2" fill="none"/></svg>
  <div class="a" style="left:0;top:373px;width:92px;height:16px;background:#d9d9d9"></div>
  <svg class="a" style="left:18px;top:78px" width="8" height="8" viewBox="0 0 8 8"><path d="M4 0L5 2.8L8 3L5.6 5L6.4 8L4 6.3L1.6 8L2.4 5L0 3L3 2.8Z" fill="#2a7fd4"/></svg>
  <svg class="a" style="left:20px;top:95px" width="11" height="8" viewBox="0 0 11 8"><rect x="0" y="0" width="11" height="8" fill="#2d8fe0"/><rect x="1" y="1" width="9" height="6" fill="#49a6f0"/></svg>
  <svg class="a" style="left:20px;top:109px" width="11" height="11" viewBox="0 0 11 11"><path d="M3.5 0H7.5V5H10.5L5.5 10.5L0.5 5H3.5Z" fill="#2a7fd4"/></svg>
  <svg class="a" style="left:21px;top:125px" width="9" height="11" viewBox="0 0 9 11"><path d="M0.5 0.5H6L8.5 3V10.5H0.5Z" fill="#fafafa" stroke="#9aa" stroke-width="1"/><rect x="2.5" y="4" width="4" height="1" fill="#6a9fd0"/><rect x="2.5" y="6" width="4" height="1" fill="#6a9fd0"/></svg>
  <svg class="a" style="left:20px;top:142px" width="11" height="9" viewBox="0 0 11 9"><rect x="0.5" y="0.5" width="10" height="8" fill="#eef3f8" stroke="#9aa" stroke-width="1"/><rect x="2" y="3" width="7" height="3" fill="#2f6fb8"/><rect x="2" y="5.5" width="7" height="1.5" fill="#2a3a50"/></svg>
  <svg class="a" style="left:83px;top:95px" width="8" height="8" viewBox="0 0 8 8"><path d="M4.2 0.8L7.2 3.8L6.2 4.4L5.2 4.2L3.8 5.6L3.9 6.9L1.1 4.1L2.4 4.2L3.8 2.8L3.6 1.8Z" fill="#8a8a8a"/><path d="M2.3 5.7L0.6 7.4" stroke="#8a8a8a" stroke-width="1"/></svg>
  <svg class="a" style="left:83px;top:111px" width="8" height="8" viewBox="0 0 8 8"><path d="M4.2 0.8L7.2 3.8L6.2 4.4L5.2 4.2L3.8 5.6L3.9 6.9L1.1 4.1L2.4 4.2L3.8 2.8L3.6 1.8Z" fill="#8a8a8a"/><path d="M2.3 5.7L0.6 7.4" stroke="#8a8a8a" stroke-width="1"/></svg>
  <svg class="a" style="left:83px;top:127px" width="8" height="8" viewBox="0 0 8 8"><path d="M4.2 0.8L7.2 3.8L6.2 4.4L5.2 4.2L3.8 5.6L3.9 6.9L1.1 4.1L2.4 4.2L3.8 2.8L3.6 1.8Z" fill="#8a8a8a"/><path d="M2.3 5.7L0.6 7.4" stroke="#8a8a8a" stroke-width="1"/></svg>
  <svg class="a" style="left:83px;top:143px" width="8" height="8" viewBox="0 0 8 8"><path d="M4.2 0.8L7.2 3.8L6.2 4.4L5.2 4.2L3.8 5.6L3.9 6.9L1.1 4.1L2.4 4.2L3.8 2.8L3.6 1.8Z" fill="#8a8a8a"/><path d="M2.3 5.7L0.6 7.4" stroke="#8a8a8a" stroke-width="1"/></svg>
  <svg class="a" style="left:22px;top:157px" width="9" height="11" viewBox="0 0 9 11"><path d="M0 0H7L9 2V11H0Z" fill="#f6d77e"/><path d="M0 0H7L9 2V11H0Z" fill="none" stroke="#e2b84a" stroke-width="0.6"/><path d="M7 8L9 10V11H7Z" fill="#e0b850"/></svg>
  <svg class="a" style="left:22px;top:173px" width="9" height="11" viewBox="0 0 9 11"><path d="M0 0H7L9 2V11H0Z" fill="#f6d77e"/><path d="M0 0H7L9 2V11H0Z" fill="none" stroke="#e2b84a" stroke-width="0.6"/><path d="M7 8L9 10V11H7Z" fill="#e0b850"/></svg>
  <svg class="a" style="left:22px;top:189px" width="9" height="11" viewBox="0 0 9 11"><path d="M0 0H7L9 2V11H0Z" fill="#f6d77e"/><path d="M0 0H7L9 2V11H0Z" fill="none" stroke="#e2b84a" stroke-width="0.6"/><path d="M7 8L9 10V11H7Z" fill="#e0b850"/></svg>
  <svg class="a" style="left:22px;top:205px" width="9" height="11" viewBox="0 0 9 11"><path d="M0 0H7L9 2V11H0Z" fill="#f6d77e"/><path d="M0 0H7L9 2V11H0Z" fill="none" stroke="#e2b84a" stroke-width="0.6"/><path d="M7 8L9 10V11H7Z" fill="#e0b850"/></svg>
  <svg class="a" style="left:22px;top:221px" width="9" height="11" viewBox="0 0 9 11"><path d="M0 0H7L9 2V11H0Z" fill="#f6d77e"/><path d="M0 0H7L9 2V11H0Z" fill="none" stroke="#e2b84a" stroke-width="0.6"/><path d="M7 8L9 10V11H7Z" fill="#e0b850"/></svg>
  <svg class="a" style="left:22px;top:237px" width="9" height="11" viewBox="0 0 9 11"><path d="M0 0H7L9 2V11H0Z" fill="#f6d77e"/><path d="M0 0H7L9 2V11H0Z" fill="none" stroke="#e2b84a" stroke-width="0.6"/><path d="M7 8L9 10V11H7Z" fill="#e0b850"/></svg>
  <svg class="a" style="left:16px;top:258px" width="9" height="11" viewBox="0 0 9 11"><path d="M0 0H7L9 2V11H0Z" fill="#f6d77e"/><path d="M0 0H7L9 2V11H0Z" fill="none" stroke="#e2b84a" stroke-width="0.6"/><path d="M7 8L9 10V11H7Z" fill="#e0b850"/></svg>
  <svg class="a" style="left:15px;top:281px" width="12" height="10" viewBox="0 0 12 10"><rect x="0.5" y="0.5" width="11" height="7" fill="#5ab0ea" stroke="#3a8cd0" stroke-width="1"/><rect x="2" y="9" width="8" height="1" fill="#8aa0b8"/></svg>
  <svg class="a" style="left:20px;top:295px" width="11" height="11" viewBox="0 0 11 11"><path d="M0 2.5L5 0L11 2.5V9L5 11L0 9Z" fill="#3ab0d8"/><path d="M0 2.5L5 4.5V11L0 9Z" fill="#9ee2f4"/><path d="M5 4.5L11 2.5V9L5 11Z" fill="#1c8fc4"/></svg>
  <svg class="a" style="left:20px;top:311px" width="11" height="11" viewBox="0 0 11 11"><path d="M3.5 0H7.5V5H10.5L5.5 10.5L0.5 5H3.5Z" fill="#2a7fd4"/></svg>
  <svg class="a" style="left:20px;top:328px" width="11" height="8" viewBox="0 0 11 8"><rect x="0" y="0" width="11" height="8" fill="#2d8fe0"/><rect x="1" y="1" width="9" height="6" fill="#49a6f0"/></svg>
  <svg class="a" style="left:21px;top:342px" width="9" height="11" viewBox="0 0 9 11"><path d="M0.5 0.5H6L8.5 3V10.5H0.5Z" fill="#fafafa" stroke="#9aa" stroke-width="1"/><rect x="2.5" y="4" width="4" height="1" fill="#6a9fd0"/><rect x="2.5" y="6" width="4" height="1" fill="#6a9fd0"/></svg>
  <svg class="a" style="left:20px;top:359px" width="11" height="9" viewBox="0 0 11 9"><rect x="0.5" y="0.5" width="10" height="8" fill="#eef3f8" stroke="#9aa" stroke-width="1"/><rect x="2" y="3" width="7" height="3" fill="#2f6fb8"/><rect x="2" y="5.5" width="7" height="1.5" fill="#2a3a50"/></svg>
  <svg class="a" style="left:21px;top:374px" width="9" height="11" viewBox="0 0 9 11"><rect x="0" y="0" width="9" height="11" rx="1" fill="#1f2836"/><rect x="1.5" y="1.5" width="3" height="3.5" fill="#8aa8c8"/><rect x="5" y="1.5" width="2.5" height="3.5" fill="#d8c040"/><rect x="1.5" y="6" width="3" height="3.5" fill="#3a7fd0"/><rect x="5" y="6" width="2.5" height="3.5" fill="#b8a040"/></svg>
  <svg class="a" style="left:22px;top:391px" width="6" height="4" viewBox="0 0 6 4"><path d="M1 4V0L5 4Z" fill="#2a7fd4"/></svg>
  <!-- folders -->
  <svg class="a" style="left:129px;top:76px" width="42" height="56" viewBox="0 0 42 56"><path d="M1 0H33V5.5H38V50H1Z" fill="#e7c56e"/><rect x="26.5" y="10" width="9" height="43" fill="#f6f6f6"/><rect x="28" y="13" width="6" height="0.8" fill="#a8c0cc"/><rect x="28" y="16" width="6" height="0.8" fill="#a8c0cc"/><rect x="28" y="19" width="6" height="0.8" fill="#a8c0cc"/><rect x="28" y="22" width="6" height="0.8" fill="#a8c0cc"/><rect x="27.5" y="29" width="7" height="5" fill="#4a94d0"/><rect x="27.5" y="34" width="7" height="3" fill="#2a4660"/><rect x="28" y="40" width="6" height="0.8" fill="#d0d0d0"/><rect x="28" y="43" width="6" height="0.8" fill="#d0d0d0"/><rect x="28" y="46" width="6" height="0.8" fill="#d0d0d0"/><path d="M35.5 33L41 37V50.5L35.5 53Z" fill="#efcf7c"/><path d="M1 0L27 9.5V47.5L11 53.5L1 47Z" fill="#f6da8e"/><path d="M1 0L11 3.5V53.5L1 47Z" fill="#f3d585"/><path d="M11 3.5V53.5" stroke="#e9c874" stroke-width="1"/><path d="M18 6V51" stroke="#f0d27f" stroke-width="1"/></svg><svg class="a" style="left:203px;top:76px" width="42" height="56" viewBox="0 0 42 56"><path d="M1 0H33V5.5H38V50H1Z" fill="#e7c56e"/><rect x="26.5" y="10" width="9" height="43" fill="#f6f6f6"/><rect x="28" y="13" width="6" height="0.8" fill="#a8c0cc"/><rect x="28" y="16" width="6" height="0.8" fill="#a8c0cc"/><rect x="28" y="19" width="6" height="0.8" fill="#a8c0cc"/><rect x="28" y="22" width="6" height="0.8" fill="#a8c0cc"/><rect x="27.5" y="29" width="7" height="5" fill="#4a94d0"/><rect x="27.5" y="34" width="7" height="3" fill="#2a4660"/><rect x="28" y="40" width="6" height="0.8" fill="#d0d0d0"/><rect x="28" y="43" width="6" height="0.8" fill="#d0d0d0"/><rect x="28" y="46" width="6" height="0.8" fill="#d0d0d0"/><path d="M35.5 33L41 37V50.5L35.5 53Z" fill="#efcf7c"/><path d="M1 0L27 9.5V47.5L11 53.5L1 47Z" fill="#f6da8e"/><path d="M1 0L11 3.5V53.5L1 47Z" fill="#f3d585"/><path d="M11 3.5V53.5" stroke="#e9c874" stroke-width="1"/><path d="M18 6V51" stroke="#f0d27f" stroke-width="1"/></svg><svg class="a" style="left:278px;top:76px" width="42" height="56" viewBox="0 0 42 56"><path d="M1 0H33V5.5H38V50H1Z" fill="#e7c56e"/><rect x="26.5" y="10" width="9" height="43" fill="#f6f6f6"/><rect x="28" y="13" width="6" height="0.8" fill="#a8c0cc"/><rect x="28" y="16" width="6" height="0.8" fill="#a8c0cc"/><rect x="28" y="19" width="6" height="0.8" fill="#a8c0cc"/><rect x="28" y="22" width="6" height="0.8" fill="#a8c0cc"/><rect x="27.5" y="29" width="7" height="5" fill="#4a94d0"/><rect x="27.5" y="34" width="7" height="3" fill="#2a4660"/><rect x="28" y="40" width="6" height="0.8" fill="#d0d0d0"/><rect x="28" y="43" width="6" height="0.8" fill="#d0d0d0"/><rect x="28" y="46" width="6" height="0.8" fill="#d0d0d0"/><path d="M35.5 33L41 37V50.5L35.5 53Z" fill="#efcf7c"/><path d="M1 0L27 9.5V47.5L11 53.5L1 47Z" fill="#f6da8e"/><path d="M1 0L11 3.5V53.5L1 47Z" fill="#f3d585"/><path d="M11 3.5V53.5" stroke="#e9c874" stroke-width="1"/><path d="M18 6V51" stroke="#f0d27f" stroke-width="1"/></svg>
  <!-- bottom panel -->
  <div class="a" style="left:0;top:395px;width:788px;height:78px;background:#f0f0f0"></div>
  <div class="a" style="left:82px;top:403px;width:703px;height:15px;background:#fff;border:1px solid #b0b0b0"></div>
  <svg class="a" style="left:773px;top:408px" width="8" height="5" viewBox="0 0 8 5"><path d="M0.8 0.8L4 4L7.2 0.8" stroke="#444" stroke-width="1" fill="none"/></svg>
  <div class="a" style="left:82px;top:420px;width:703px;height:15px;background:#e4e4e4;border:1px solid #c8c8c8"></div>
  <svg class="a" style="left:773px;top:425px" width="8" height="5" viewBox="0 0 8 5"><path d="M0.8 0.8L4 4L7.2 0.8" stroke="#444" stroke-width="1" fill="none"/></svg>
  <svg class="a" style="left:8px;top:457px" width="7" height="5" viewBox="0 0 7 5"><path d="M0.8 4L3.5 1.2L6.2 4" stroke="#333" stroke-width="1.2" fill="none"/></svg>
  <div class="a" style="left:652px;top:449px;width:57px;height:16px;background:#e1e1e1;border:2px solid #0078d7"></div>
  <div class="a" style="left:719px;top:449px;width:57px;height:16px;background:#e1e1e1;border:1px solid #adadad"></div>
  <svg class="a" style="left:781px;top:466px" width="6" height="6" viewBox="0 0 6 6"><rect x="4" y="0" width="1" height="1" fill="#aaa"/><rect x="2" y="2" width="1" height="1" fill="#aaa"/><rect x="4" y="2" width="1" height="1" fill="#aaa"/><rect x="0" y="4" width="1" height="1" fill="#aaa"/><rect x="2" y="4" width="1" height="1" fill="#aaa"/><rect x="4" y="4" width="1" height="1" fill="#aaa"/></svg>
</div>

<div class="t" style="left:198.25px;top:20.6px;font-size:9px;color:#1a1a1a;-webkit-text-stroke:0.25px #1a1a1a;transform:scaleX(0.746);transform-origin:0 0">ファイルの保存先</div>
<div class="t" style="left:267.0px;top:41.0px;font-size:10px;color:#444;-webkit-text-stroke:0.25px #444">›</div>
<div class="t" style="left:276.16px;top:41.5px;font-size:9px;color:#1a1a1a;-webkit-text-stroke:0.25px #1a1a1a;transform:scaleX(0.836);transform-origin:0 0">PC</div>
<div class="t" style="left:291.5px;top:41.0px;font-size:10px;color:#444;-webkit-text-stroke:0.25px #444">›</div>
<div class="t" style="left:300.07px;top:41.5px;font-size:9px;color:#1a1a1a;-webkit-text-stroke:0.25px #1a1a1a;transform:scaleX(0.717);transform-origin:0 0">ビデオ</div>
<div class="t" style="left:324.3px;top:41.0px;font-size:10px;color:#444;-webkit-text-stroke:0.25px #444">›</div>
<div class="t" style="left:829.68px;top:41.5px;font-size:9px;color:#6d6d6d;-webkit-text-stroke:0.25px #6d6d6d;transform:scaleX(0.762);transform-origin:0 0">ビデオの検索</div>
<div class="t" style="left:192.2px;top:63.1px;font-size:9px;color:#1a1a1a;-webkit-text-stroke:0.25px #1a1a1a;transform:scaleX(0.888);transform-origin:0 0">整理</div>
<div class="t" style="left:236.82px;top:63.1px;font-size:9px;color:#1a1a1a;-webkit-text-stroke:0.25px #1a1a1a;transform:scaleX(0.679);transform-origin:0 0">新しいフォルダー</div>
<div class="t" style="left:209.12px;top:93.0px;font-size:9px;color:#1a1a1a;-webkit-text-stroke:0.25px #1a1a1a;transform:scaleX(0.679);transform-origin:0 0">クイック アクセス</div>
<div class="t" style="left:214.45px;top:108.5px;font-size:9px;color:#1a1a1a;-webkit-text-stroke:0.25px #1a1a1a;transform:scaleX(0.65);transform-origin:0 0">デスクトップ</div>
<div class="t" style="left:214.41px;top:124.3px;font-size:9px;color:#1a1a1a;-webkit-text-stroke:0.25px #1a1a1a;transform:scaleX(0.688);transform-origin:0 0">ダウンロード</div>
<div class="t" style="left:213.07px;top:140.9px;font-size:9px;color:#1a1a1a;-webkit-text-stroke:0.25px #1a1a1a;transform:scaleX(0.676);transform-origin:0 0">ドキュメント</div>
<div class="t" style="left:213.69px;top:156.1px;font-size:9px;color:#1a1a1a;-webkit-text-stroke:0.25px #1a1a1a;transform:scaleX(0.703);transform-origin:0 0">ピクチャ</div>
<div class="t" style="left:208.0px;top:274.0px;font-size:9px;color:#1a1a1a;-webkit-text-stroke:0.25px #1a1a1a">(</div>
<div class="t" style="left:208.75px;top:294.7px;font-size:9px;color:#1a1a1a;-webkit-text-stroke:0.25px #1a1a1a;transform:scaleX(0.845);transform-origin:0 0">PC</div>
<div class="t" style="left:214.8px;top:310.8px;font-size:9px;color:#1a1a1a;-webkit-text-stroke:0.25px #1a1a1a;transform:scaleX(0.695);transform-origin:0 0">3D オブジェクト</div>
<div class="t" style="left:214.32px;top:326.9px;font-size:9px;color:#1a1a1a;-webkit-text-stroke:0.25px #1a1a1a;transform:scaleX(0.684);transform-origin:0 0">ダウンロード</div>
<div class="t" style="left:214.34px;top:342.2px;font-size:9px;color:#1a1a1a;-webkit-text-stroke:0.25px #1a1a1a;transform:scaleX(0.663);transform-origin:0 0">デスクトップ</div>
<div class="t" style="left:212.96px;top:358.7px;font-size:9px;color:#1a1a1a;-webkit-text-stroke:0.25px #1a1a1a;transform:scaleX(0.68);transform-origin:0 0">ドキュメント</div>
<div class="t" style="left:213.57px;top:374.8px;font-size:9px;color:#1a1a1a;-webkit-text-stroke:0.25px #1a1a1a;transform:scaleX(0.715);transform-origin:0 0">ピクチャ</div>
<div class="t" style="left:213.55px;top:391.0px;font-size:9px;color:#1a1a1a;-webkit-text-stroke:0.25px #1a1a1a;transform:scaleX(0.725);transform-origin:0 0">ビデオ</div>
<div class="t" style="left:212.86px;top:406.5px;font-size:9px;color:#1a1a1a;-webkit-text-stroke:0.25px #1a1a1a;transform:scaleX(0.714);transform-origin:0 0;clip-path:inset(0 0 6.50px 0)">ミュージック</div>
<div class="t" style="left:214.55px;top:420.5px;font-size:9px;color:#1a1a1a;-webkit-text-stroke:0.25px #1a1a1a;transform:scaleX(0.752);transform-origin:0 0">ファイル名(N):</div>
<div class="t" style="left:265.3px;top:420.5px;font-size:9px;color:#1a1a1a;-webkit-text-stroke:0.25px #1a1a1a;transform:scaleX(0.903);transform-origin:0 0">名称未設定.mov</div>
<div class="t" style="left:202.36px;top:437.8px;font-size:9px;color:#1a1a1a;-webkit-text-stroke:0.25px #1a1a1a;transform:scaleX(0.744);transform-origin:0 0">ファイルの種類(T):</div>
<div class="t" style="left:266.2px;top:437.8px;font-size:9px;color:#1a1a1a;-webkit-text-stroke:0.25px #1a1a1a;transform:scaleX(0.693);transform-origin:0 0">すべてのファイル (*)</div>
<div class="t" style="left:199.06px;top:469.0px;font-size:9px;color:#1a1a1a;-webkit-text-stroke:0.25px #1a1a1a;transform:scaleX(0.739);transform-origin:0 0">フォルダーの非表示</div>
<div class="t" style="left:852.7px;top:466.6px;font-size:9px;color:#1a1a1a;-webkit-text-stroke:0.25px #1a1a1a;transform:scaleX(0.912);transform-origin:0 0">保存</div>
<div class="t" style="left:911.31px;top:466.6px;font-size:9px;color:#1a1a1a;-webkit-text-stroke:0.25px #1a1a1a;transform:scaleX(0.691);transform-origin:0 0">キャンセル</div>
<!-- overlay -->
<div class="a" style="left:373px;top:273px;width:459px;height:95px;background:#d3d3d3;border-radius:3px"></div>

<div class="t" style="left:413.72px;top:288.2px;font-size:28px;color:#2b2b2b;font-weight:700;-webkit-text-stroke:0.6px #2b2b2b;transform:scaleX(1.012);transform-origin:0 0">「レンダーキューに追加」で</div>
<div class="t" style="left:441.8px;top:323.6px;font-size:28px;color:#2b2b2b;font-weight:700;-webkit-text-stroke:0.6px #2b2b2b;transform:scaleX(1.021);transform-origin:0 0">動画ファイルを書き出す</div>
<!-- frame -->
<div class="a" style="left:0;top:0;width:1024px;height:1px;background:#a8a8a8"></div>
<div class="a" style="left:0;top:1px;width:1024px;height:1px;background:#101012"></div>
<div class="a" style="left:0;top:0;width:1px;height:605px;background:#a8a8a8"></div>
<div class="a" style="left:1px;top:0;width:1px;height:605px;background:#101012"></div>

</body>
</html>
